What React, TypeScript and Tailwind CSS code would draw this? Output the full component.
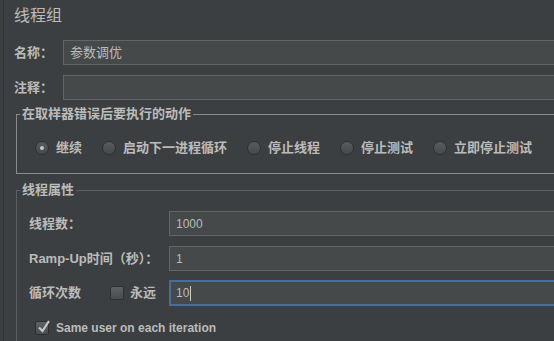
import type { ReactNode } from "react";

const radios = ["继续", "启动下一进程循环", "停止线程", "停止测试", "立即停止测试"];

function Radio({ label, checked }: { label: string; checked?: boolean }) {
  return (
    <div className="flex items-center">
      <span className="flex h-[14px] w-[14px] items-center justify-center rounded-full border border-[#2d2f31] bg-gradient-to-b from-[#595c5e] to-[#46494b]">
        {checked ? <span className="h-[4px] w-[4px] rounded-full bg-[#c4c4c4]" /> : null}
      </span>
      <span className="ml-[7px] text-[13px] font-bold leading-[18px]">{label}</span>
    </div>
  );
}

function CheckBox({ checked }: { checked?: boolean }) {
  return (
    <span className="relative block h-[14px] w-[14px] rounded-[2px] border border-[#2d2f31] bg-gradient-to-b from-[#5e6163] to-[#4a4d4f]">
      {checked ? (
        <svg className="absolute left-[1px] top-[-3px]" width="14" height="15" viewBox="0 0 14 15">
          <path d="M2 8.5 L5.5 12 L12 2" fill="none" stroke="#c6c6c6" strokeWidth="2.2" />
        </svg>
      ) : null}
    </span>
  );
}

function Field({ children, focused }: { children?: ReactNode; focused?: boolean }) {
  return (
    <div
      className={
        focused
          ? "-mr-3 flex h-[26px] flex-1 items-center border-2 border-[#4a6e99] bg-[#45494a] pl-[5px] text-[12px]"
          : "-mr-3 flex h-[25px] flex-1 items-center border border-[#646464] bg-[#45494a] pl-[6px] text-[12px]"
      }
    >
      {children}
    </div>
  );
}

export default function App() {
  return (
    <div className="h-[341px] w-[554px] overflow-hidden bg-[#3c3f41] font-['Liberation_Sans','Noto_Sans_CJK_SC',sans-serif] text-[#bbbbbb]">
      <div className="ml-[3px] h-full border-l border-[#2f3133] pl-[10px]">
        <div className="pt-[6px] text-[16px] leading-[20px]">线程组</div>

        <div className="mt-[14px] flex items-center">
          <span className="w-[49px] text-[13px] font-bold">名称：</span>
          <Field>
            <span className="text-[13px]">参数调优</span>
          </Field>
        </div>
        <div className="mt-[10px] flex items-center">
          <span className="w-[49px] text-[13px] font-bold">注释：</span>
          <Field />
        </div>

        <fieldset className="-mr-4 ml-[2px] mt-[5px] h-[69px] border border-[#8a8a8a] p-0">
          <legend className="ml-[3px] px-[2px] text-[13px] font-bold leading-[18px]">在取样器错误后要执行的动作</legend>
          <div className="flex h-[50px] items-center gap-[20px] pl-[18px]">
            {radios.map((r, i) => (
              <Radio key={r} label={r} checked={i === 0} />
            ))}
          </div>
        </fieldset>

        <fieldset className="-mr-4 ml-[2px] mt-[7px] h-[200px] border border-[#5c5f61] p-0">
          <legend className="ml-[3px] px-[2px] text-[13px] font-bold leading-[18px]">线程属性</legend>
          <div className="pl-[12px] pt-[12px]">
            <div className="flex items-center">
              <span className="w-[140px] text-[13px] font-bold">线程数：</span>
              <Field>1000</Field>
            </div>
            <div className="mt-[10px] flex items-center">
              <span className="w-[140px] text-[13px] font-bold">Ramp-Up时间（秒）：</span>
              <Field>1</Field>
            </div>
            <div className="mt-[9px] flex items-center">
              <span className="w-[81px] text-[13px] font-bold">循环次数</span>
              <CheckBox />
              <span className="ml-[6px] w-[39px] text-[13px] font-bold">永远</span>
              <Field focused>
                10
                <span className="ml-[1px] h-[15px] w-[1px] bg-[#c8c8c8]" />
              </Field>
            </div>
            <div className="mt-[13px] flex items-center pl-[6px]">
              <CheckBox checked />
              <span className="ml-[7px] text-[12px] font-bold">Same user on each iteration</span>
            </div>
          </div>
        </fieldset>
      </div>
    </div>
  );
}
